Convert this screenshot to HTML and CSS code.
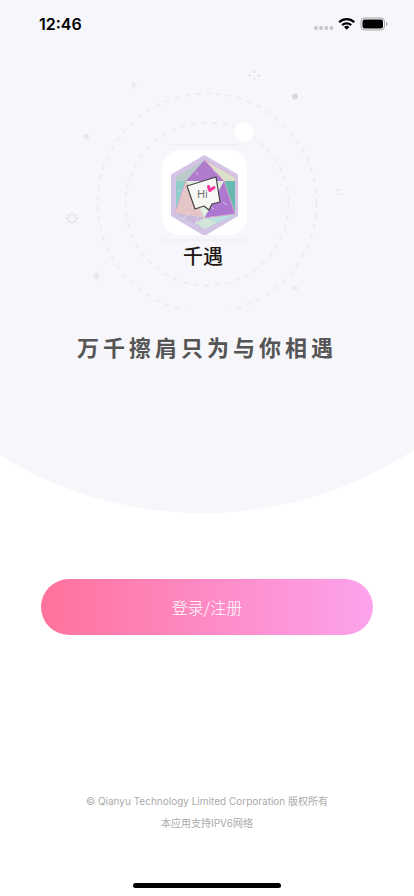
FILE: index.html
```
<!DOCTYPE html>
<html lang="zh-CN">
<head>
    <meta charset="utf-8">
    <meta name="viewport" content="width=device-width, initial-scale=1">
    <title>千遇</title>
    <link rel="stylesheet" href="styles.css">
</head>
<body>
    <header class="hero">
        <div class="status-bar">
            <span class="time">12:46</span>
            <svg class="status-icons" width="76" height="16" viewBox="0 0 76 16" aria-hidden="true">
                <g fill="#c4c4c9">
                    <circle cx="4" cy="12" r="1.9"/>
                    <circle cx="9" cy="12" r="1.9"/>
                    <circle cx="14.300" cy="12" r="1.9"/>
                    <circle cx="19.500" cy="12" r="1.9"/>
                </g>
                <g fill="none" stroke="#000" stroke-width="2.3">
                    <path d="M27.200 6.200a10.600 10.600 0 0 1 15 0"/>
                    <path d="M30.200 9.200a6.500 6.500 0 0 1 9 0"/>
                </g>
                <path d="M34.700 13.800l-2.700-2.700a4 4 0 0 1 5.400 0z"/>
                <rect x="49" y="2" width="23.500" height="12" rx="3.600" fill="none" stroke="#a5a5a9"/>
                <rect x="50.500" y="3.500" width="20.500" height="9" rx="2.200"/>
                <path d="M74 6v4c1.800-.7 1.800-3.300 0-4z" fill="#a5a5a9"/>
            </svg>
        </div>

        <div class="brand">
            <!-- Orbits and small stars behind the logo -->
            <svg class="orbits" viewBox="0 0 414 262" aria-hidden="true">
                <g fill="none" stroke="#ebebef" stroke-width="1.5" stroke-dasharray="5 5.5">
                    <circle cx="207" cy="155" r="109.5"/>
                    <circle cx="207" cy="156" r="81.5"/>
                </g>
                <path d="M168 97h74M160 192h88" stroke="#f2f2f6" stroke-width="2"/>
                <circle cx="244" cy="84" r="10" fill="#fff"/>
                <circle cx="295" cy="48.500" r="3" fill="#d3dae2"/>
                <circle cx="295" cy="240" r="2.600" fill="#ebecef"/>
                <circle cx="86.500" cy="88.500" r="1.700" fill="none" stroke="#dce2e7" stroke-width="1.400"/>
                <path d="M134 33l2.500 3-3 5-2.500-4z" fill="#e9ebec"/>
                <path d="M96.500 222.500q1 4 4 5.500-3 1.500-4 5.500-1-4-4-5.500 3-1.500 4-5.500z" fill="#e9eaec"/>
                <g stroke="#dedfe4" stroke-width="1.300">
                    <path d="M254.500 22v3M254.500 29v3M248 27.500h3M257.500 27.500h3"/>
                    <path d="M336.500 142l1.500 1M340 142.500l1.500-1M336.500 147l1.500-1M340 146l1.500 1"/>
                </g>
                <path d="M72 164.500v3M72 173v3M66 170.500h3.500M74.500 170.500h3.500M67.800 166.300l2.200 2.200M74 172.500l2.200 2.200M67.800 174.700l2.200-2.200M74 168.500l2.200-2.200" stroke="#dce3e9" stroke-width="1.500"/>
            </svg>

            <div class="logo">
                <svg viewBox="0 0 85 85" role="img" aria-label="Hi">
                    <path d="M42.500 5L76 24.500V66L42.500 86 9 66V24.500z" fill="#d3c4e6"/>
                    <path d="M42.500 10L73 27v38L42.500 79 14 64V27z" fill="#aed6d4"/>
                    <path d="M42.500 10L14 27v4h10z" fill="#bccbc9"/>
                    <path d="M42.500 10L73 27v4H62z" fill="#dcdfcc"/>
                    <path d="M42.500 10L62 31H24z" fill="#b07bcc"/>
                    <path d="M14 31h10L14 62z" fill="#8ecdca"/>
                    <path d="M62 31h11v32z" fill="#67b8b0"/>
                    <path d="M24 31h38L42.500 68z" fill="#e2eedf"/>
                    <path d="M24 31l18.500 37L13 63z" fill="#e6c5c6"/>
                    <path d="M62 31l11 33-30.500 4z" fill="#ae78d0"/>
                    <path d="M13 63l29.500 5v11z" fill="#cbb9dc"/>
                    <path d="M73 64l-30.500 4v11z" fill="#b8e0dc"/>
                    <path d="M42.500 68L33 73l9.500 6 12-6z" fill="#d3e6da"/>
                    <path d="M24 31L13 63M62 31l11 33-30.500 4M42.500 10L62 31M42.500 10L73 27" fill="none" stroke="#e5a4c5" stroke-width=".8"/>
                    <path d="M20 69l8-6M33 75l3-9M54 72l-5-6M16 40l5 3M66 18l4 6M51 20l3 2M61 52l4 3M34 22l2 3M49 57l3 2" stroke="#e9ddf0" stroke-width=".7"/>
                    <path d="M25 36l29-9 4 25-8 2-3 6-5-4-9 3z" fill="#f7f8f6" stroke="#444" stroke-width="1.200" stroke-linejoin="round"/>
                    <text x="35" y="48" class="logo-text">Hi</text>
                    <path d="M46.500 36.500l1.300 4 4.200-3" fill="none" stroke="#f7369f" stroke-width="3" stroke-linecap="round" stroke-linejoin="round"/>
                </svg>
            </div>
            <h1 class="app-name">千遇</h1>
        </div>

        <p class="slogan">万千擦肩只为与你相遇</p>
    </header>

    <main class="actions">
        <button type="button" class="login-button">登录/注册</button>
    </main>

    <footer class="footer">
        <p>© Qianyu Technology Limited Corporation 版权所有</p>
        <p>本应用支持IPV6网络</p>
        <div class="home-indicator"></div>
    </footer>
</body>
</html>
```
FILE: styles.css
```
* {
    box-sizing: border-box;
}

body {
    margin: 0;
    min-height: 100vh;
    display: flex;
    flex-direction: column;
    background: #fff;
    font-family: Inter, "Noto Sans CJK SC", sans-serif;
}

h1, p {
    margin: 0;
}

/* Top area with the curved bottom edge */
.hero {
    padding-bottom: 148px;
    background: #f6f6fb;
    clip-path: circle(384px at 49% 129px);
}

.status-bar {
    display: flex;
    justify-content: space-between;
    align-items: center;
    height: 48px;
    padding: 0 26px 0 39px;
}

.time {
    font-size: 16px;
    font-weight: 600;
}

/* Logo and app name */
.brand {
    position: relative;
    display: flex;
    flex-direction: column;
    align-items: center;
    height: 262px;
    padding-top: 102px;
}

.orbits {
    position: absolute;
    top: 0;
    left: 0;
    width: 100%;
    height: 100%;
}

.logo {
    position: relative;
    width: 85px;
    height: 85px;
    margin-right: 5px;
    border-radius: 18px;
    background: #fff;
}

.logo svg {
    display: block;
}

.logo-text {
    font-family: "Open Sans", sans-serif;
    font-size: 11px;
    fill: #666;
}

.app-name {
    position: relative;
    margin-top: 8px;
    margin-right: 8px;
    color: #231815;
    font-size: 20px;
    font-weight: 500;
    line-height: 28px;
}

.slogan {
    margin-top: 21px;
    color: #555;
    font-size: 22px;
    font-weight: 700;
    line-height: 35px;
    letter-spacing: 4px;
    text-align: center;
}

/* Login button */
.actions {
    padding: 65px 10% 0;
}

.login-button {
    display: block;
    width: 100%;
    height: 56px;
    border: 0;
    border-radius: 28px;
    background: linear-gradient(to right, #ff729c, #fca3ed);
    color: #fff;
    font-family: "Noto Sans CJK SC", sans-serif;
    font-size: 16px;
    font-weight: 300;
}

/* Copyright */
.footer {
    margin-top: auto;
    padding-bottom: 8px;
    color: #aaa;
    font-size: 10px;
    line-height: 22px;
    text-align: center;
}

.home-indicator {
    width: 148px;
    height: 5px;
    margin: 49px auto 0;
    border-radius: 3px;
    background: #000;
}
```
